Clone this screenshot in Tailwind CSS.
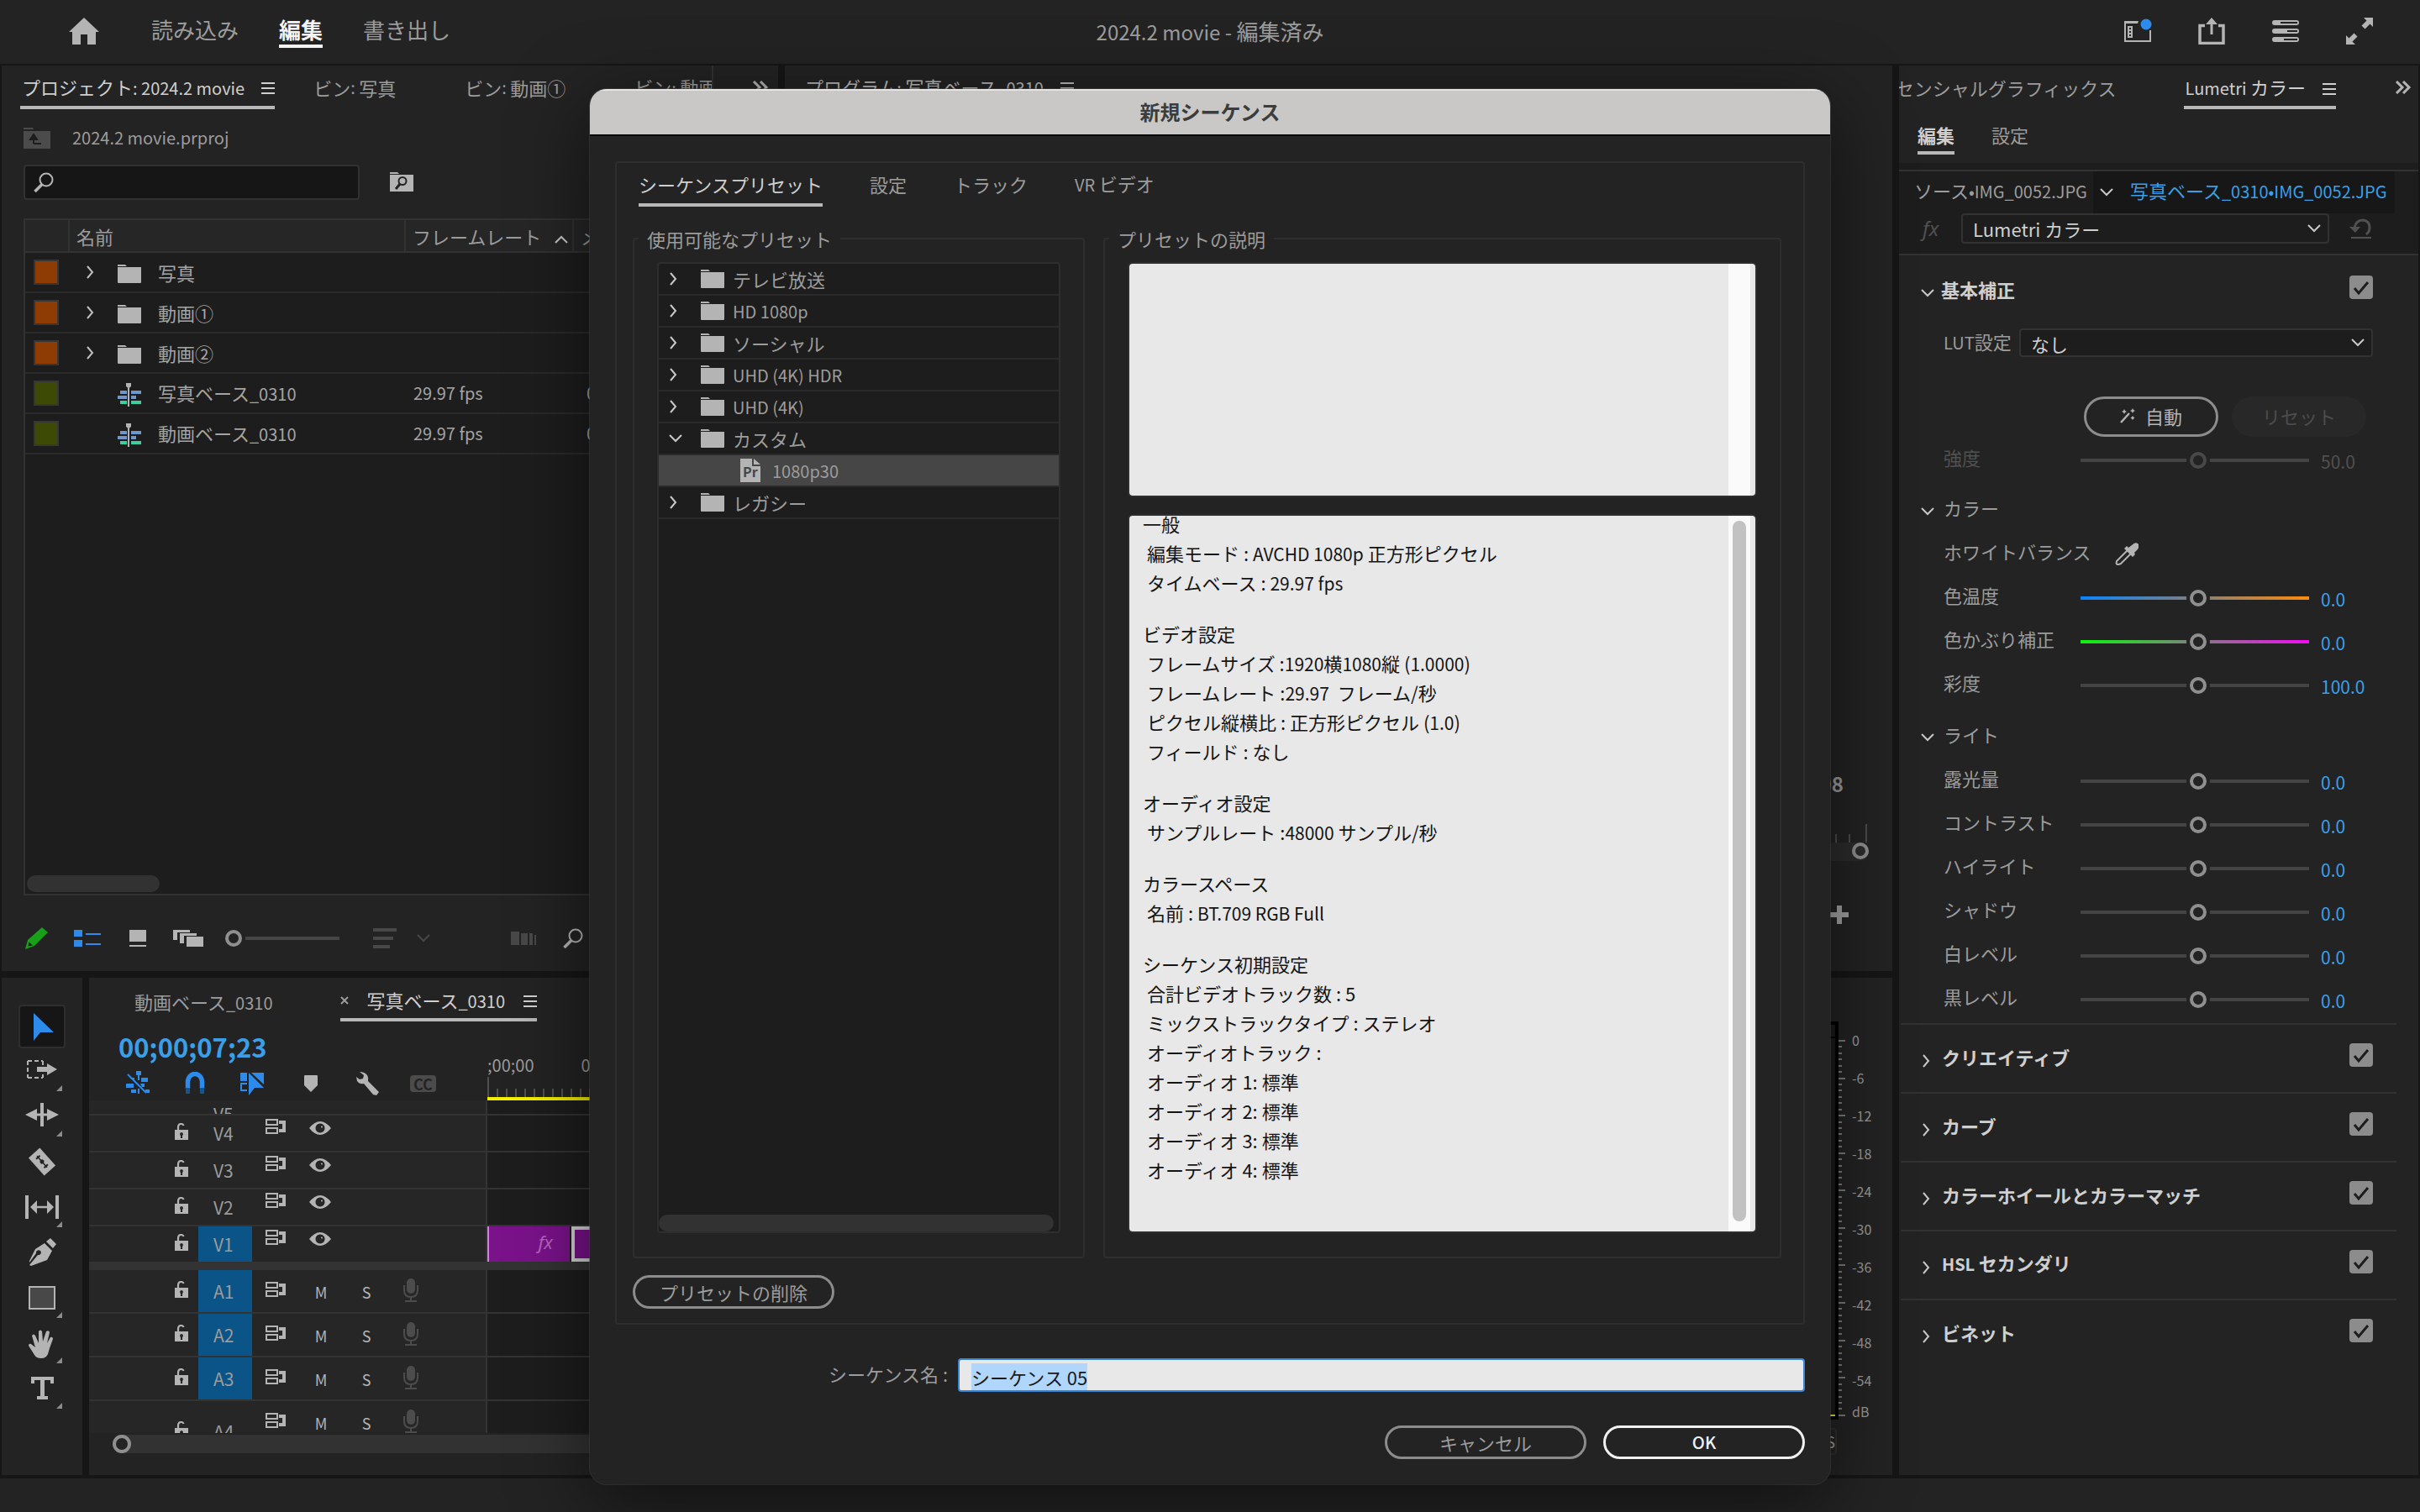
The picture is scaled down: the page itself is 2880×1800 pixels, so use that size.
<!DOCTYPE html>
<html lang="ja">
<head>
<meta charset="utf-8">
<title>2024.2 movie - 編集済み</title>
<script src="https://cdn.jsdelivr.net/npm/@tailwindcss/browser@4"></script>
</head>
<body class="relative flex h-screen flex-col overflow-hidden bg-[#161616] font-['Noto_Sans_CJK_JP',sans-serif] text-[22px] leading-8 text-[#9c9c9c]">

<!-- Shared icons -->
<svg class="hidden" aria-hidden="true">
  <symbol id="i-right" viewBox="0 0 10 16"><path d="M2 1l6 7-6 7" fill="none" stroke="currentColor" stroke-width="2"/></symbol>
  <symbol id="i-down" viewBox="0 0 16 10"><path d="M1 1l7 7 7-7" fill="none" stroke="currentColor" stroke-width="2"/></symbol>
  <symbol id="i-menu" viewBox="0 0 16 14"><path d="M0 1h16M0 7h16M0 13h16" stroke="currentColor" stroke-width="2"/></symbol>
  <symbol id="i-more" viewBox="0 0 20 16"><path d="M2 1l7 7-7 7M10 1l7 7-7 7" fill="none" stroke="currentColor" stroke-width="3"/></symbol>
  <symbol id="i-folder" viewBox="0 0 28 23"><path d="M0 0h9l2 2H0zM0 3h28v18q0 1-1 1H1q-1 0-1-1z" fill="currentColor"/></symbol>
  <symbol id="i-find" viewBox="0 0 24 24"><circle cx="15" cy="9" r="7.500" fill="none" stroke="currentColor" stroke-width="2"/><path d="M10 14.500L1.500 23" stroke="currentColor" stroke-width="3.500"/></symbol>
  <symbol id="i-seq" viewBox="0 0 28 28"><path d="M10 0h6v4l-3 2.500-3-2.500z" fill="#b4b4b4"/><path d="M13 6v22" stroke="#b4b4b4" stroke-width="2"/><path d="M3 9h8v4H3zM16 9h12v4H16zM0 15h11v4H0zM16 15h6v4h-6z" fill="#7196cb"/><path d="M3 21h8v4H3zM16 21h12v4H16z" fill="#40cf9c"/></symbol>
  <symbol id="i-lock" viewBox="0 0 16 20"><path d="M4 9V5.500Q4 1 7.500 1q2.500 0 3 2" fill="none" stroke="currentColor" stroke-width="2.200"/><path fill-rule="evenodd" d="M0 8h16v12H0zM8 11a2.200 2.200 0 0 0-1 4V18h2v-3A2.200 2.200 0 0 0 8 11z" fill="currentColor"/></symbol>
  <symbol id="i-sync" viewBox="0 0 24 18"><path d="M1 1h13v6H1zM1 11h13v6H1z" fill="none" stroke="currentColor" stroke-width="2"/><path d="M16 2h8v14h-8v-4h4V6h-4z" fill="currentColor"/></symbol>
  <symbol id="i-eye" viewBox="0 0 26 16"><path fill-rule="evenodd" d="M0 8Q13-8 26 8 13 24 0 8zM13 2.500a5.500 5.500 0 1 0 .01 0z" fill="currentColor"/><circle cx="15" cy="6.500" r="1" fill="currentColor"/></symbol>
  <symbol id="i-mic" viewBox="0 0 18 28"><rect x="4" y="0" width="10" height="18" rx="5" fill="currentColor"/><path d="M1 8v6q0 8 8 8t8-8V8M9 22v5M2 27h14" fill="none" stroke="currentColor" stroke-width="2"/></symbol>
  <symbol id="i-check" viewBox="0 0 28 28"><path d="M6 15l5 6L22 8" fill="none" stroke="#1d1d1d" stroke-width="3"/></symbol>
</svg>

<!-- Application header -->
<header class="grid h-[76px] shrink-0 grid-cols-[1fr_auto_1fr] items-center bg-[#232323] px-[82px] pb-0.5 text-[26px]">
  <nav class="flex items-center gap-12">
    <button aria-label="ホーム" class="mr-3.5 w-9 text-[#b4b4b4]"><svg class="h-8 w-9" viewBox="0 0 36 32" fill="currentColor"><path d="M18 0l18 17h-4v15H22V20h-8v12H4V17H0z"/></svg></button>
    <button class="border-b-4 border-transparent leading-9">読み込み</button>
    <button class="border-b-4 border-[#f4f4f4] leading-9 font-bold text-[#f4f4f4]">編集</button>
    <button class="border-b-4 border-transparent leading-9">書き出し</button>
  </nav>
  <h1><span class="text-[24px]">2024.2 movie - </span>編集済み</h1>
  <div class="-mr-7 flex justify-end gap-[52px] text-[#b4b4b4]">
    <button aria-label="ワークスペース"><svg class="h-8 w-9" viewBox="0 0 36 32" fill="none"><path d="M3 5v23h30V15" stroke="currentColor" stroke-width="2"/><path d="M2 4h17l-1 3H2zM6 10h6v14H6z" fill="currentColor"/><path d="M8 12h2v2H8zM8 16h2v2H8zM8 20h2v2H8z" fill="#232323"/><circle cx="28" cy="8" r="6.500" fill="#2d8ceb"/></svg></button>
    <button aria-label="クイック書き出し"><svg class="h-8 w-9" viewBox="0 0 36 32" fill="none" stroke="currentColor"><path d="M10 9.500H4v21h28v-21h-6" stroke-width="3.500"/><path d="M18 20V5" stroke-width="3"/><path d="M18 0l7 8H11z" fill="currentColor" stroke="none"/></svg></button>
    <button aria-label="進行状況"><svg class="h-8 w-9" viewBox="0 0 36 32" fill="currentColor"><rect x="2" y="3" width="32" height="6" rx="3"/><rect x="2" y="13" width="32" height="6" rx="3"/><rect x="2" y="23" width="32" height="6" rx="3"/><path d="M12 5h20v2H12zM20 15h12v2H20zM16 25h16v2H16z" fill="#232323"/></svg></button>
    <button aria-label="全画面"><svg class="h-8 w-9" viewBox="0 0 36 32"><path d="M2 32V21l3.500 3.500 6-6 4 4-6 6L13 32zM34 0v11l-3.500-3.500-6 6-4-4 6-6L23 0z" fill="currentColor"/></svg></button>
  </div>
</header>

<main class="flex min-h-0 flex-1 gap-2 px-0.5 pt-0.5 pb-1">
  <div class="flex min-w-0 flex-1 flex-col gap-2">
    <div class="flex min-h-0 grow-[1078] basis-0 gap-2">

      <!-- Project panel -->
      <section class="flex w-[924px] flex-col overflow-hidden bg-[#232323]">
        <div class="flex h-[52px] shrink-0 gap-[46px] pl-[22px] whitespace-nowrap">
          <button class="flex items-center gap-5 border-b-4 border-[#b8b8b8] pt-1 pl-0.5 text-[#cfcfcf]"><span>プロジェクト<span class="text-[20px]">: 2024.2 movie</span></span><svg class="mt-0.5 h-3.5 w-4"><use href="#i-menu"/></svg></button>
          <button class="flex h-[52px] items-center">ビン<span class="whitespace-pre text-[20px]">: </span>写真</button>
          <button class="ml-9 flex h-[52px] items-center">ビン<span class="whitespace-pre text-[20px]">: </span>動画①</button>
          <div class="ml-9 flex h-[52px] w-[94px] items-center overflow-hidden border-r-2 border-[#333]"><button>ビン<span class="whitespace-pre text-[20px]">: </span>動画②</button></div>
          <button aria-label="その他のタブ" class="text-[#b4b4b4]"><svg class="h-4 w-5"><use href="#i-more"/></svg></button>
        </div>
        <div class="flex items-center gap-[26px] pt-[18px] pl-[26px]">
          <svg class="h-[26px] w-8" viewBox="0 0 32 26"><path d="M0 1h11l1 2H0zM0 5h32v21H0z" fill="#4b4b4b"/><path d="M12 20V12M12 20h9M8 15l4-6 4 6z" fill="#1d1d1d" stroke="#1d1d1d" stroke-width="2"/></svg>
          <span class="text-[20px]">2024.2 movie.prproj</span>
        </div>
        <div class="mt-4 flex items-center gap-9 pl-[26px]">
          <label class="grid w-[400px] items-center">
            <input type="search" aria-label="検索" class="[grid-area:1/1] h-[42px] w-full rounded border-2 border-[#323232] bg-[#161616] pl-12 outline-none">
            <svg class="[grid-area:1/1] pointer-events-none ml-3 h-6 w-6 text-[#b4b4b4]"><use href="#i-find"/></svg>
          </label>
          <button aria-label="検索ビン"><svg class="h-6 w-7" viewBox="0 0 28 24"><path d="M0 0h9l2 2H0zM0 3h28v20H0z" fill="#b4b4b4"/><circle cx="15" cy="10.500" r="4.500" fill="none" stroke="#232323" stroke-width="2"/><path d="M12 14l-5 6" stroke="#232323" stroke-width="3"/></svg></button>
        </div>
        <div class="mt-[22px] ml-[26px] flex flex-1 flex-col justify-between border-y-2 border-l-2 border-[#323232] bg-[#1d1d1d]">
          <table class="w-full table-fixed border-collapse text-left">
            <colgroup><col class="w-[52px]"><col class="w-[400px]"><col class="w-[200px]"><col></colgroup>
            <thead class="bg-[#262626]">
              <tr class="h-[38px] border-b-2 border-[#323232]">
                <th class="border-r-2 border-[#323232]" aria-label="ラベル"></th>
                <th class="border-r-2 border-[#323232] pl-2 font-normal">名前</th>
                <th class="border-r-2 border-[#323232] pl-2 font-normal"><div class="flex items-center gap-4 whitespace-nowrap">フレームレート <svg class="mt-2 h-2.5 w-4 rotate-180 text-[#c8c8c8]"><use href="#i-down"/></svg></div></th>
                <th class="pl-2 font-normal">メディア開始</th>
              </tr>
            </thead>
            <tbody id="bins"></tbody>
          </table>
          <div class="m-0.5 h-5 w-[158px] rounded-full bg-[#323232]"></div>
        </div>
        <div class="flex h-[90px] shrink-0 items-center pt-3 pl-7 text-[#b4b4b4]">
          <button aria-label="書き込み可"><svg class="h-7 w-7" viewBox="0 0 28 28"><path d="M0 27l3-11L20 1l7 6L11 23z" fill="#18a018"/><path d="M3.500 23.500l1-5 4.500 4z" fill="#232323"/></svg></button>
          <button class="ml-[30px]" aria-label="リスト表示"><svg class="h-5 w-8" viewBox="0 0 32 20" fill="#2d8ceb"><path d="M0 0h10v8H0zM0 12h10v8H0zM14 4h18v2H14zM14 16h18v2H14z"/></svg></button>
          <button class="ml-[34px]" aria-label="アイコン表示"><svg class="h-5 w-5" viewBox="0 0 20 20" fill="currentColor"><path d="M0 0h20v14H0zM0 18h20v2H0z"/></svg></button>
          <button class="ml-8" aria-label="フリーフォーム表示"><svg class="h-5 w-9" viewBox="0 0 36 20" fill="currentColor"><path d="M0 0h20v3H5v9H0zM8 4h20v3H13v9H8zM16 8h20v12H16z"/></svg></button>
          <input type="range" aria-label="ズーム" min="0" max="100" value="0" class="ml-[26px] h-5 w-[138px] appearance-none bg-[linear-gradient(#464646,#464646)] bg-[length:112px_4px] bg-[position:24px_center] bg-no-repeat [&::-webkit-slider-thumb]:h-5 [&::-webkit-slider-thumb]:w-5 [&::-webkit-slider-thumb]:appearance-none [&::-webkit-slider-thumb]:rounded-full [&::-webkit-slider-thumb]:border-4 [&::-webkit-slider-thumb]:border-[#8f8f8f] [&::-webkit-slider-thumb]:bg-[#232323]">
          <button class="ml-[38px] flex items-center gap-6 text-[#484848]" aria-label="並べ替え"><svg class="h-6 w-7" viewBox="0 0 28 24" fill="currentColor"><path d="M0 0h28v4H0zM0 10h24v4H0zM0 20h20v4H0z"/></svg><svg class="h-2.5 w-4"><use href="#i-down"/></svg></button>
          <button class="ml-24 text-[#484848]" aria-label="シーケンスへ自動"><svg class="h-4 w-[30px]" viewBox="0 0 30 16" fill="currentColor"><path d="M0 0h10v16H0zM12 2h8v14h-8zM22 2h4v14h-4zM28 4h2v12h-2z"/></svg></button>
          <button class="ml-8" aria-label="検索"><svg class="h-6 w-6"><use href="#i-find"/></svg></button>
        </div>
      </section>

      <!-- Program monitor -->
      <section class="flex min-w-0 flex-1 flex-col justify-between overflow-hidden bg-[#232323] pl-6">
        <div class="flex h-[52px] items-center gap-5 text-[#b8b8b8]"><span>プログラム<span class="text-[20px]">: </span>写真ベース<span class="text-[20px]">_0310</span></span><svg class="mt-0.5 h-3.5 w-4"><use href="#i-menu"/></svg></div>
        <div class="flex flex-col items-end pb-14">
          <span class="mr-[58px] text-[24px] leading-9 font-bold">00;00;28;08</span>
          <svg class="mt-7 mr-7 h-6 w-14 text-[#4c4c4c]" viewBox="0 0 56 24" fill="currentColor"><path d="M16 14h2v10h-2zM32 14h2v10h-2zM52 2h2v22h-2z"/></svg>
          <div class="mr-7 flex h-[22px] w-full justify-end rounded-r-full bg-[#2c2c2c]"><span class="h-5 w-5 rounded-full border-4 border-[#8f8f8f]"></span></div>
          <button aria-label="ボタンエディター" class="mt-[53px] mr-[52px]"><svg class="h-[22px] w-[22px]" viewBox="0 0 22 22" fill="#a4a4a4"><path d="M8 0h6v8h8v6h-8v8H8v-8H0V8h8z"/></svg></button>
        </div>
      </section>
    </div>

    <div class="flex min-h-0 grow-[592] basis-0 gap-2">
      <!-- Tools -->
      <nav id="tools" class="flex w-24 shrink-0 flex-col items-center bg-[#232323] pt-8"></nav>

      <!-- Timeline -->
      <section class="flex min-w-0 flex-1 flex-col overflow-hidden bg-[#232323]">
        <div class="flex h-[52px] shrink-0 gap-20 pl-[54px] whitespace-nowrap">
          <button class="h-14 leading-[56px]">動画ベース<span class="text-[20px]">_0310</span></button>
          <button class="flex items-center gap-[22px] border-b-4 border-[#b8b8b8] pt-1.5 text-[#cfcfcf]"><svg class="h-2.5 w-2.5 text-[#9c9c9c]" viewBox="0 0 10 10"><path d="M1 1l8 8M9 1l-8 8" stroke="currentColor" stroke-width="2"/></svg><span>写真ベース<span class="text-[20px]">_0310</span></span><svg class="mt-0.5 h-3.5 w-4"><use href="#i-menu"/></svg></button>
        </div>
        <div class="flex h-[94px] shrink-0">
          <div class="w-[474px] shrink-0 pl-[35px]">
            <div class="pt-3 text-[31px] leading-9 font-bold text-[#3b9fe8]">00;00;07;23</div>
            <div class="flex items-center pt-2.5 pl-[9px] text-[#b4b4b4]">
              <button class="mr-[42px]" aria-label="ネスト"><svg class="h-8 w-7" viewBox="0 0 28 32" fill="#2d8ceb"><path d="M12 1h6v5h-6zM14 5h2v7h-2zM18 9h8v5h-8zM4 9h6v3zM0 16h9v5H0zM17 16h5v4h-3zM6 23h6v4H6zM14 22h2v6h-2zM23 23h5v4h-5z"/><path d="M2 5l22 22" stroke="#2d8ceb" stroke-width="2"/></svg></button>
              <button class="mr-[42px]" aria-label="スナップ"><svg class="h-7 w-6" viewBox="0 0 24 28" fill="none"><path d="M3.500 20v-8a8 9 0 0 1 17 0v8" stroke="#2d8ceb" stroke-width="5.500"/><path d="M1 19h5v7H1zM18 19h5v7h-5z" fill="#17558f"/></svg></button>
              <button class="mr-12" aria-label="リンクされた選択"><svg class="h-8 w-7" viewBox="0 0 28 32" fill="#2d8ceb"><path d="M0 3h8v10H0zM13 3h15v14zM10 3v27l7-9h11z"/><path d="M8 16H1v8h7" fill="none" stroke="#2d8ceb" stroke-width="2"/></svg></button>
              <button class="mr-[46px]" aria-label="マーカー"><svg class="h-5 w-4" viewBox="0 0 16 20" fill="currentColor"><path d="M0 1q0-1 1-1h14q1 0 1 1v11l-8 8-8-8z"/></svg></button>
              <button class="mr-9" aria-label="表示設定"><svg class="h-7 w-7" viewBox="0 0 28 28" fill="currentColor"><path d="M4 0q6 0 9 4 2 3 1 7l13 13-3 4-4-1L9 14q-5 1-8-3L0 6l4 3 4-1 1-4z"/></svg></button>
              <button class="rounded bg-[#4b4b4b] px-1 text-[18px] leading-5 font-bold text-[#232323]" aria-label="キャプション">CC</button>
            </div>
          </div>
          <div class="flex min-w-0 flex-1 flex-col justify-end">
            <div class="flex gap-14 text-[20px] leading-7 whitespace-nowrap"><span>;00;00</span><span>00;00;02;00</span></div>
            <div class="flex h-6 items-end border-l-2 border-[#505050]"><div class="h-2.5 w-full bg-[repeating-linear-gradient(90deg,transparent_0_9px,#505050_9px_11px)]"></div></div>
            <div class="h-1 bg-[#f4ee00]"></div>
          </div>
        </div>
        <div id="tracks"></div>
        <div class="mt-0.5 ml-7 h-[22px] shrink-0 rounded-l-full bg-[#323232]"><span class="block h-[22px] w-[22px] rounded-full border-4 border-[#8f8f8f] bg-[#232323]"></span></div>
      </section>

      <!-- Audio meters -->
      <section class="flex w-[150px] shrink-0 flex-col bg-[#232323] pt-[52px]">
        <div class="flex">
          <div class="h-[474px] w-[86px] border-4 border-black bg-[#1a1a1a]"><div class="h-[466px] border-b-2 border-[#e6e23a] pt-3.5"><div class="h-0.5 bg-black"></div></div></div>
          <div id="ticks" class="relative mt-[22px] w-2"></div>
          <ul id="levels" class="mt-2 ml-2 text-[16px] text-[#989898]"></ul>
        </div>
        <button class="mt-1.5 h-8 w-[84px] rounded border-2 border-[#303030] text-right text-[18px] leading-7">S</button>
      </section>
    </div>
  </div>

  <!-- Lumetri panel -->
  <aside class="flex w-[618px] shrink-0 flex-col overflow-hidden bg-[#232323]">
    <div class="flex h-[52px] shrink-0 justify-end pr-2 whitespace-nowrap">
      <button class="mr-20 h-[52px] leading-[52px]">エッセンシャルグラフィックス</button>
      <button class="flex items-center gap-5 border-b-4 border-[#b8b8b8] pt-1 pl-0.5 text-[#cfcfcf]"><span><span class="text-[20px]">Lumetri </span>カラー</span><svg class="mt-1 h-3.5 w-4"><use href="#i-menu"/></svg></button>
      <span class="mt-2 ml-5 h-10 w-0.5 bg-[#333]"></span>
      <button class="ml-[50px] flex h-[52px] items-center text-[#b4b4b4]" aria-label="その他のタブ"><svg class="h-4 w-5"><use href="#i-more"/></svg></button>
    </div>
    <div class="flex h-16 shrink-0 items-start gap-11 pt-3.5 pl-[22px]">
      <button class="border-b-4 border-[#b8b8b8] pb-1 font-bold text-[#cfcfcf]">編集</button>
      <button>設定</button>
    </div>
    <div class="shrink-0 border-b-2 border-[#323232] bg-[#1d1d1d] pt-2 pb-3">
      <div class="flex h-[52px] items-center border-t-2 border-[#323232] pl-[18px] whitespace-nowrap">
        <span class="w-[213px] pb-1">ソース<span class="text-[20px]">•IMG_0052.JPG</span></span>
        <button class="flex h-[50px] items-center gap-5 bg-[#171717] pr-2.5 pb-1 pl-2 text-[#3b9fe8]"><svg class="mt-1 h-2.5 w-4 text-[#c8c8c8]"><use href="#i-down"/></svg><span>写真ベース<span class="text-[20px]">_0310•IMG_0052.JPG</span></span></button>
      </div>
      <div class="flex items-center gap-6 pl-7">
        <span class="w-[22px] font-['Noto_Sans',sans-serif] text-[24px] italic text-[#505050]">fx</span>
        <span class="grid w-[438px] items-center">
          <select aria-label="エフェクト" class="[grid-area:1/1] h-9 w-full appearance-none rounded border-2 border-[#323232] bg-[#1d1d1d] pb-0.5 pl-3 text-[#cfcfcf]"><option>Lumetri カラー</option></select>
          <svg class="[grid-area:1/1] pointer-events-none mr-2.5 h-2.5 w-4 justify-self-end text-[#c8c8c8]"><use href="#i-down"/></svg>
        </span>
        <button aria-label="リセット"><svg class="h-6 w-[26px] text-[#505050]" viewBox="0 0 26 24"><path d="M6 11q2-9 10-9 8 1 8 9 0 5-4 8" fill="none" stroke="currentColor" stroke-width="3"/><path d="M0 10h13l-6 7zM2 22h24v2H2z" fill="currentColor"/></svg></button>
      </div>
    </div>
    <div class="shrink-0 pr-[54px] pl-[26px]">
      <div class="flex h-[82px] items-center gap-2">
        <svg class="mt-2 h-2.5 w-4 text-[#c8c8c8]"><use href="#i-down"/></svg>
        <h2 class="flex-1 pb-0.5 font-bold text-[#cfcfcf]">基本補正</h2>
        <span class="mb-1.5 grid"><input type="checkbox" checked aria-label="基本補正" class="[grid-area:1/1] h-7 w-7 appearance-none rounded bg-[#8c8c8c]"><svg class="[grid-area:1/1] pointer-events-none h-7 w-7"><use href="#i-check"/></svg></span>
      </div>
      <div class="flex items-center gap-2 pt-1 pl-[27px]">
        <label for="lut" class="w-[82px] pb-0.5 whitespace-nowrap"><span class="text-[20px]">LUT</span>設定</label>
        <span class="grid flex-1 items-center">
          <select id="lut" class="[grid-area:1/1] h-[34px] w-full appearance-none rounded border-2 border-[#323232] bg-[#1d1d1d] pb-0.5 pl-3 text-[#cfcfcf]"><option>なし</option></select>
          <svg class="[grid-area:1/1] pointer-events-none mr-2.5 h-2.5 w-4 justify-self-end text-[#c8c8c8]"><use href="#i-down"/></svg>
        </span>
      </div>
      <div class="mt-[46px] flex justify-end gap-4 pr-2">
        <button class="flex h-12 w-40 items-center justify-center gap-3 rounded-full border-[3px] border-[#8c8c8c] pb-0.5 text-[#b4b4b4]"><svg class="h-[18px] w-[18px]" viewBox="0 0 18 18"><path d="M1 17L11 6" stroke="currentColor" stroke-width="2.500"/><path d="M5 1l1 2 2 1-2 1-1 2-1-2-2-1 2-1zM15 0l1 2 2 1-2 1-1 2-1-2-2-1 2-1zM15 9l1 1.500 1.500 1-1.500 1-1 1.500-1-1.500-1.500-1 1.500-1z" fill="currentColor"/></svg>自動</button>
        <button disabled class="h-12 w-40 rounded-full bg-[#282828] pb-0.5 text-[#4c4c4c]">リセット</button>
      </div>
      <div id="intensity"></div>
      <div class="flex h-[60px] items-center gap-[11px] pt-1"><svg class="mt-2.5 h-2.5 w-4 text-[#c8c8c8]"><use href="#i-down"/></svg><h3>カラー</h3></div>
      <div class="flex h-[52px] items-center gap-7 pl-[27px]"><span class="pb-1">ホワイトバランス</span>
        <button aria-label="スポイト"><svg class="mt-1 h-7 w-7" viewBox="0 0 28 28"><path d="M16 8L2 22q-1 4 1 4t4-1L20 12" fill="none" stroke="#b4b4b4" stroke-width="2"/><path d="M20 3q4-4 7-2t0 7l-4 4 1 2-3 3L11 7l3-3 2 2z" fill="#b4b4b4"/></svg></button>
      </div>
      <div id="color"></div>
      <div class="flex h-[62px] items-center gap-[11px] pt-1.5"><svg class="mt-2 h-2.5 w-4 text-[#c8c8c8]"><use href="#i-down"/></svg><h3>ライト</h3></div>
      <div id="light" class="pb-1"></div>
    </div>
    <div id="sections" class="ml-0.5 pr-[26px]"></div>
  </aside>
</main>
<footer class="h-10 shrink-0 bg-[#232323]"></footer>

<!-- New sequence dialog -->
<div class="absolute inset-0 flex items-start justify-center pt-[106px]">
  <form role="dialog" aria-labelledby="dlg" class="w-[1476px] overflow-hidden rounded-[20px] bg-[#232323] shadow-[0_20px_90px_rgba(0,0,0,0.55),0_0_0_1px_rgba(90,90,90,0.5)]" onsubmit="return false">
    <h2 id="dlg" class="h-14 border-t-2 border-b-2 border-t-[#e4e4e2] border-b-black bg-[#c9c8c6] text-center text-[24px] leading-[50px] font-bold text-[#3c3c3c]">新規シーケンス</h2>
    <div class="px-[30px] py-[30px]">
      <div class="rounded border-2 border-[#2e2e2e] px-[19px] pb-[17px]">
        <div class="flex gap-14 pt-2 pl-[7px]">
          <button type="button" class="border-b-4 border-[#b8b8b8] pb-1.5 text-[#cfcfcf]">シーケンスプリセット</button>
          <button type="button" class="border-b-4 border-transparent pb-1.5">設定</button>
          <button type="button" class="border-b-4 border-transparent pb-1.5">トラック</button>
          <button type="button" class="border-b-4 border-transparent pb-1.5"><span class="text-[20px]">VR </span>ビデオ</button>
        </div>
        <div class="mt-[22px] flex gap-[22px] pr-[7px]">
          <fieldset class="h-[1230px] w-[538px] rounded border-2 border-[#2e2e2e] px-[27px] pt-3 pb-7">
            <legend class="-ml-[22px] px-2.5">使用可能なプリセット</legend>
            <div class="flex h-full flex-col justify-between rounded border-2 border-[#2e2e2e] bg-[#1d1d1d]">
              <ul id="presets"></ul>
              <div class="h-5 w-[470px] rounded-full bg-[#323232]"></div>
            </div>
          </fieldset>
          <fieldset class="flex min-w-0 flex-1 flex-col rounded border-2 border-[#2e2e2e] px-[27px] pt-3 pb-7">
            <legend class="-ml-[22px] px-2.5">プリセットの説明</legend>
            <div class="flex h-full flex-col gap-5">
              <div class="flex h-[280px] justify-end rounded-md border-2 border-[#2e2e2e] bg-[#e8e8e8] pr-1.5"><div class="w-[26px] bg-[#fafafa]"></div></div>
              <div class="flex flex-1 overflow-hidden rounded-md border-2 border-[#2e2e2e] bg-[#e8e8e8] pr-1.5">
                <div id="summary" class="-mt-2 flex-1 pl-4 leading-[35px] whitespace-pre text-[#141414]"></div>
                <div class="w-[26px] bg-[#fafafa] px-[5px] pt-1.5"><div class="h-[834px] rounded-full bg-[#c2c2c2]"></div></div>
              </div>
            </div>
          </fieldset>
        </div>
        <button type="button" class="mt-5 h-10 w-60 rounded-full border-[3px] border-[#8c8c8c] leading-[30px]">プリセットの削除</button>
      </div>
      <div class="mt-10 flex items-center justify-end gap-3">
        <label for="seqname" class="pb-1">シーケンス名 :</label>
        <input id="seqname" type="text" value="シーケンス 05" class="h-10 w-[1008px] rounded border-2 border-[#3a86d4] bg-[#e8e8e8] px-3.5 pt-1 text-[#1a1a1a] outline-none selection:bg-[#b0d6fb] selection:text-[#1a1a1a]">
      </div>
      <div class="mt-10 flex justify-end gap-5">
        <button type="button" class="h-10 w-60 rounded-full border-[3px] border-[#8c8c8c] leading-[30px]">キャンセル</button>
        <button type="submit" class="h-10 w-60 rounded-full border-[3px] border-[#f0f0f0] text-[20px] leading-[30px] font-medium text-[#f0f0f0]">OK</button>
      </div>
    </div>
  </form>
</div>

<script>
const fill = (id, html) => { document.getElementById(id).innerHTML = html; };
// Latin runs are set a step smaller than the Japanese text around them.
const mix = (s) => s.replace(/[\x21-\x7e][\x20-\x7e]*/g, '<span class="text-[20px]">$&</span>');

// Project items
fill('bins', [
  ['写真', '', 'bg-[#8f3c04]'], ['動画①', '', 'bg-[#8f3c04]'], ['動画②', '', 'bg-[#8f3c04]'],
  ['写真ベース_0310', '29.97 fps', 'bg-[#3d4a05]'], ['動画ベース_0310', '29.97 fps', 'bg-[#3d4a05]']
].map(([name, fps, color]) => `<tr class="h-12 border-b-2 border-[#2a2a2a] text-[#a4a4a4]">
  <td class="pl-2.5"><span class="block h-[30px] w-[30px] border-2 border-[#363636] ${color}"></span></td>
  <td><div class="flex items-center whitespace-nowrap"><span class="ml-5 w-[38px] text-[#c0c0c0]">${fps ? '' : '<svg class="h-4 w-2.5"><use href="#i-right"/></svg>'}</span>${fps
    ? '<svg class="mt-1 mr-5 h-7 w-7"><use href="#i-seq"/></svg>'
    : '<svg class="mt-1 mr-5 h-[23px] w-7 text-[#b4b4b4]"><use href="#i-folder"/></svg>'}<span>${mix(name)}</span></div></td>
  <td class="pl-2.5 text-[20px]">${fps}</td><td class="pl-4 text-[20px] whitespace-nowrap">${fps ? '00;00;00;00' : ''}</td></tr>`).join(''));

// Tools
fill('tools', [
  ['選択', '<path d="M10 4v33l8-10h16z" fill="#2d8ceb"/>'],
  ['トラックの前方選択', '<path d="M3 7h18M3 27h18M3 7v20M21 7v5M21 23v4" fill="none" stroke="currentColor" stroke-width="2" stroke-dasharray="5 3"/><path d="M14 14h12v-4l12 7-12 7v-4H14z" fill="currentColor"/>'],
  ['リップル', '<path d="M18 3h4v28h-4zM14 10v14L0 17zM26 10v14l14-7z" fill="currentColor"/><path d="M12 17h16" stroke="currentColor" stroke-width="3"/>'],
  ['レーザー', '<g transform="rotate(48 20 19)"><rect x="6" y="10" width="28" height="18" fill="currentColor"/><path d="M11 19h18" stroke="#232323" stroke-width="1.500"/><circle cx="20" cy="19" r="2.500" fill="#232323"/><path d="M13 16v6M27 16v6" stroke="#232323" stroke-width="2"/></g>'],
  ['スリップ', '<path d="M2 5v28M38 5v28" stroke="currentColor" stroke-width="4"/><path d="M10 19h20" stroke="currentColor" stroke-width="2.500"/><path d="M14 11v16l-8-8zM26 11v16l8-8z" fill="currentColor"/>'],
  ['ペン', '<path d="M23 8l9 9-6 11L7 35l-2-1 10-12a3 3 0 1 0-2-2L5 31l0-2 7-14zM25 6l5-4 7 7-4 5z" fill="currentColor"/>'],
  ['長方形', '<rect x="5" y="6" width="30" height="26" fill="#484848" stroke="currentColor" stroke-width="2"/>'],
  ['手のひら', '<path d="M11 33L4 22q0-3 3-2l5 4-4-14q2-3 4 0l4 9V5q2-3 4 0l1 12 4-12q3-2 4 1l-3 13 4-7q3-1 3 2l-4 11-2 7q-2 5-8 5-6 0-8-4z" fill="currentColor"/>'],
  ['横書き文字', '<path d="M7 5h27v8h-4V9h-7v19h4v4H14v-4h4V9h-7v4H7z" fill="currentColor"/>']
].map(([name, art], i) => `<button aria-label="${name}" class="mb-0.5 flex h-[52px] w-14 shrink-0 items-center justify-center rounded text-[#b4b4b4] ${i ? '' : 'border-2 border-[#2e2e2e] bg-[#161616]'}">
  <svg class="h-[52px] w-14 shrink-0" viewBox="-8 -6 56 52">${art}${i && i !== 3 && i !== 5 ? '<path d="M44 36v7h-7z" fill="#8c8c8c"/>' : ''}</svg></button>`).join(''));

// Tracks
const lane = (clip) => clip ? `<div class="flex flex-1 gap-0.5 bg-[#1d1d1d]"><div class="w-[98px] border-l-2 border-[#c78acb] bg-[#7a128a] pt-0.5 pr-5 text-right font-['Noto_Sans',sans-serif] italic text-[#b565bd]">fx</div><div class="flex-1 border-4 border-[#d4d4d4] bg-[#7a128a]"></div></div>` : '<div class="flex-1 bg-[#1d1d1d]"></div>';
const track = (name, on, audio) => {
  const box = audio ? (name === 'A4' ? 'h-[38px]' : 'h-[52px] border-b-2') : (on ? 'h-[42px]' : 'h-11 border-b-2');
  const mid = name === 'A4' ? 'h-[72px]' : 'h-full';
  return `<div class="flex ${box} overflow-hidden border-[#333]">
    <div class="flex w-[474px] items-start border-r-2 border-[#333] bg-[#262626] pl-[102px]">
      <div class="flex ${mid} items-center"><svg class="mr-3 mb-1 h-5 w-4 text-[#b4b4b4]"><use href="#i-lock"/></svg><span class="flex h-full w-16 items-center pl-[18px] text-[21px] ${on ? 'bg-[#0b5487]' : ''}">${name}</span></div>
      <div class="flex ${audio ? 'pt-3.5' : 'pt-1'} pl-4 text-[#b4b4b4]"><svg class="h-[18px] w-6"><use href="#i-sync"/></svg>${audio
        ? '<button class="ml-8 w-5 text-[18px] leading-[20px]">M</button><button class="ml-[34px] w-5 text-[18px] leading-[20px]">S</button><svg class="-mt-1 ml-[34px] h-7 w-[18px] text-[#4c4c4c]"><use href="#i-mic"/></svg>'
        : '<svg class="mt-[3px] ml-7 h-4 w-[26px]"><use href="#i-eye"/></svg>'}</div>
    </div>${lane(name === 'V1')}</div>`;
};
fill('tracks', `<div class="flex h-[18px] overflow-hidden border-b-2 border-[#333]"><div class="w-[474px] border-r-2 border-[#333] bg-[#262626] pl-[148px] text-[21px]">V5</div>${lane()}</div>`
  + track('V4') + track('V3') + track('V2') + track('V1', true)
  + '<div class="h-2.5 bg-[#333]"></div>'
  + track('A1', true, true) + track('A2', true, true) + track('A3', true, true) + track('A4', false, true));

// Audio meter scale
const ticks = [];
for (let i = 0; i <= 60; i++) ticks.push(`<span class="absolute left-0 h-0.5 bg-[#7c7c7c] ${i % 6 ? 'w-1' : 'w-2'}" style="top:${Math.round(i * 7.43)}px"></span>`);
fill('ticks', ticks.join(''));
fill('levels', ['0', '-6', '-12', '-18', '-24', '-30', '-36', '-42', '-48', '-54'].map(v => `<li class="h-[45px] leading-7">${v}</li>`).join('') + '<li class="-mt-2 leading-7">dB</li>');

// Lumetri sliders
const slider = (name, value, track, off) => `<div class="flex h-[52px] items-center pl-[27px] ${off ? 'text-[#505050]' : ''}">
  <label class="w-[163px] pb-1 whitespace-nowrap">${name}</label>
  <input type="range" aria-label="${name}" min="0" max="100" value="50" class="mt-1 h-5 w-[280px] appearance-none ${track} bg-[length:272px_4px] bg-[position:left_center] bg-no-repeat [&::-webkit-slider-thumb]:h-5 [&::-webkit-slider-thumb]:w-5 [&::-webkit-slider-thumb]:appearance-none [&::-webkit-slider-thumb]:rounded-full [&::-webkit-slider-thumb]:border-4 [&::-webkit-slider-thumb]:bg-[#232323] [&::-webkit-slider-thumb]:shadow-[0_0_0_4px_#232323] ${off ? '[&::-webkit-slider-thumb]:border-[#484848]' : '[&::-webkit-slider-thumb]:border-[#8f8f8f]'}">
  <output class="ml-1.5 pt-1.5 text-[21px] ${off ? '' : 'text-[#3b9fe8]'}">${value}</output></div>`;
const plain = 'bg-[linear-gradient(#444,#444)]';
fill('intensity', slider('強度', '50.0', plain, true));
fill('color', slider('色温度', '0.0', 'bg-[linear-gradient(90deg,#0a84ff,#808080,#ff8a0a)]')
  + slider('色かぶり補正', '0.0', 'bg-[linear-gradient(90deg,#0af50a,#808080,#f50af5)]')
  + slider('彩度', '100.0', plain));
fill('light', ['露光量', 'コントラスト', 'ハイライト', 'シャドウ', '白レベル', '黒レベル'].map(n => slider(n, '0.0', plain)).join(''));
fill('sections', ['クリエイティブ', 'カーブ', 'カラーホイールとカラーマッチ', 'HSL セカンダリ', 'ビネット'].map(n => `<div class="flex h-[82px] items-center border-t-2 border-[#323232] pr-7 pl-[25px]">
  <svg class="mt-1.5 mr-3.5 h-4 w-2.5 text-[#c8c8c8]"><use href="#i-right"/></svg><h2 class="flex-1 pb-1 font-bold text-[#cfcfcf]">${mix(n)}</h2>
  <span class="mb-2 grid"><input type="checkbox" checked aria-label="${n}" class="[grid-area:1/1] h-7 w-7 appearance-none rounded bg-[#8c8c8c]"><svg class="[grid-area:1/1] pointer-events-none h-7 w-7"><use href="#i-check"/></svg></span></div>`).join(''));

// Presets
fill('presets', ['テレビ放送', 'HD 1080p', 'ソーシャル', 'UHD (4K) HDR', 'UHD (4K)', 'カスタム', '1080p30', 'レガシー'].map(n => n === '1080p30'
  ? `<li class="flex h-[38px] items-center border-b-2 border-[#2a2a2a] bg-[#464646] pl-[97px]"><svg class="mr-3.5 h-7 w-6" viewBox="0 0 24 28"><path d="M0 0h14v9h10v19H0zM16 0l8 7h-8z" fill="#b4b4b4"/><text x="3" y="22" font-size="16" font-weight="bold" fill="#464646">Pr</text></svg><span>${mix(n)}</span></li>`
  : `<li class="flex h-[38px] items-center border-b-2 border-[#2a2a2a] pl-3"><span class="w-[38px] text-[#c8c8c8]">${n === 'カスタム' ? '<svg class="h-2.5 w-4"><use href="#i-down"/></svg>' : '<svg class="h-4 w-2.5"><use href="#i-right"/></svg>'}</span><svg class="mr-2.5 h-[23px] w-7 text-[#b4b4b4]"><use href="#i-folder"/></svg><span>${mix(n)}</span></li>`).join(''));

// Preset summary
fill('summary', [
  ['一般', '編集モード : AVCHD 1080p 正方形ピクセル', 'タイムベース : 29.97 fps'],
  ['ビデオ設定', 'フレームサイズ :1920横1080縦 (1.0000)', 'フレームレート :29.97  フレーム/秒', 'ピクセル縦横比 : 正方形ピクセル (1.0)', 'フィールド : なし'],
  ['オーディオ設定', 'サンプルレート :48000 サンプル/秒'],
  ['カラースペース', '名前 : BT.709 RGB Full'],
  ['シーケンス初期設定', '合計ビデオトラック数 : 5', 'ミックストラックタイプ : ステレオ', 'オーディオトラック :', 'オーディオ 1: 標準', 'オーディオ 2: 標準', 'オーディオ 3: 標準', 'オーディオ 4: 標準']
].map(([h, ...rows]) => `<h3>${h}</h3><ul class="mb-[26px] pl-[5px]">${rows.map(r => `<li class="h-[35px]">${r.replace(/[A-Z\d][\x20-\x7e]*\w/g, '<span class="text-[21px]">$&</span>')}</li>`).join('')}</ul>`).join(''));

const field = document.getElementById('seqname');
field.focus();
field.select();
</script>
</body>
</html>
